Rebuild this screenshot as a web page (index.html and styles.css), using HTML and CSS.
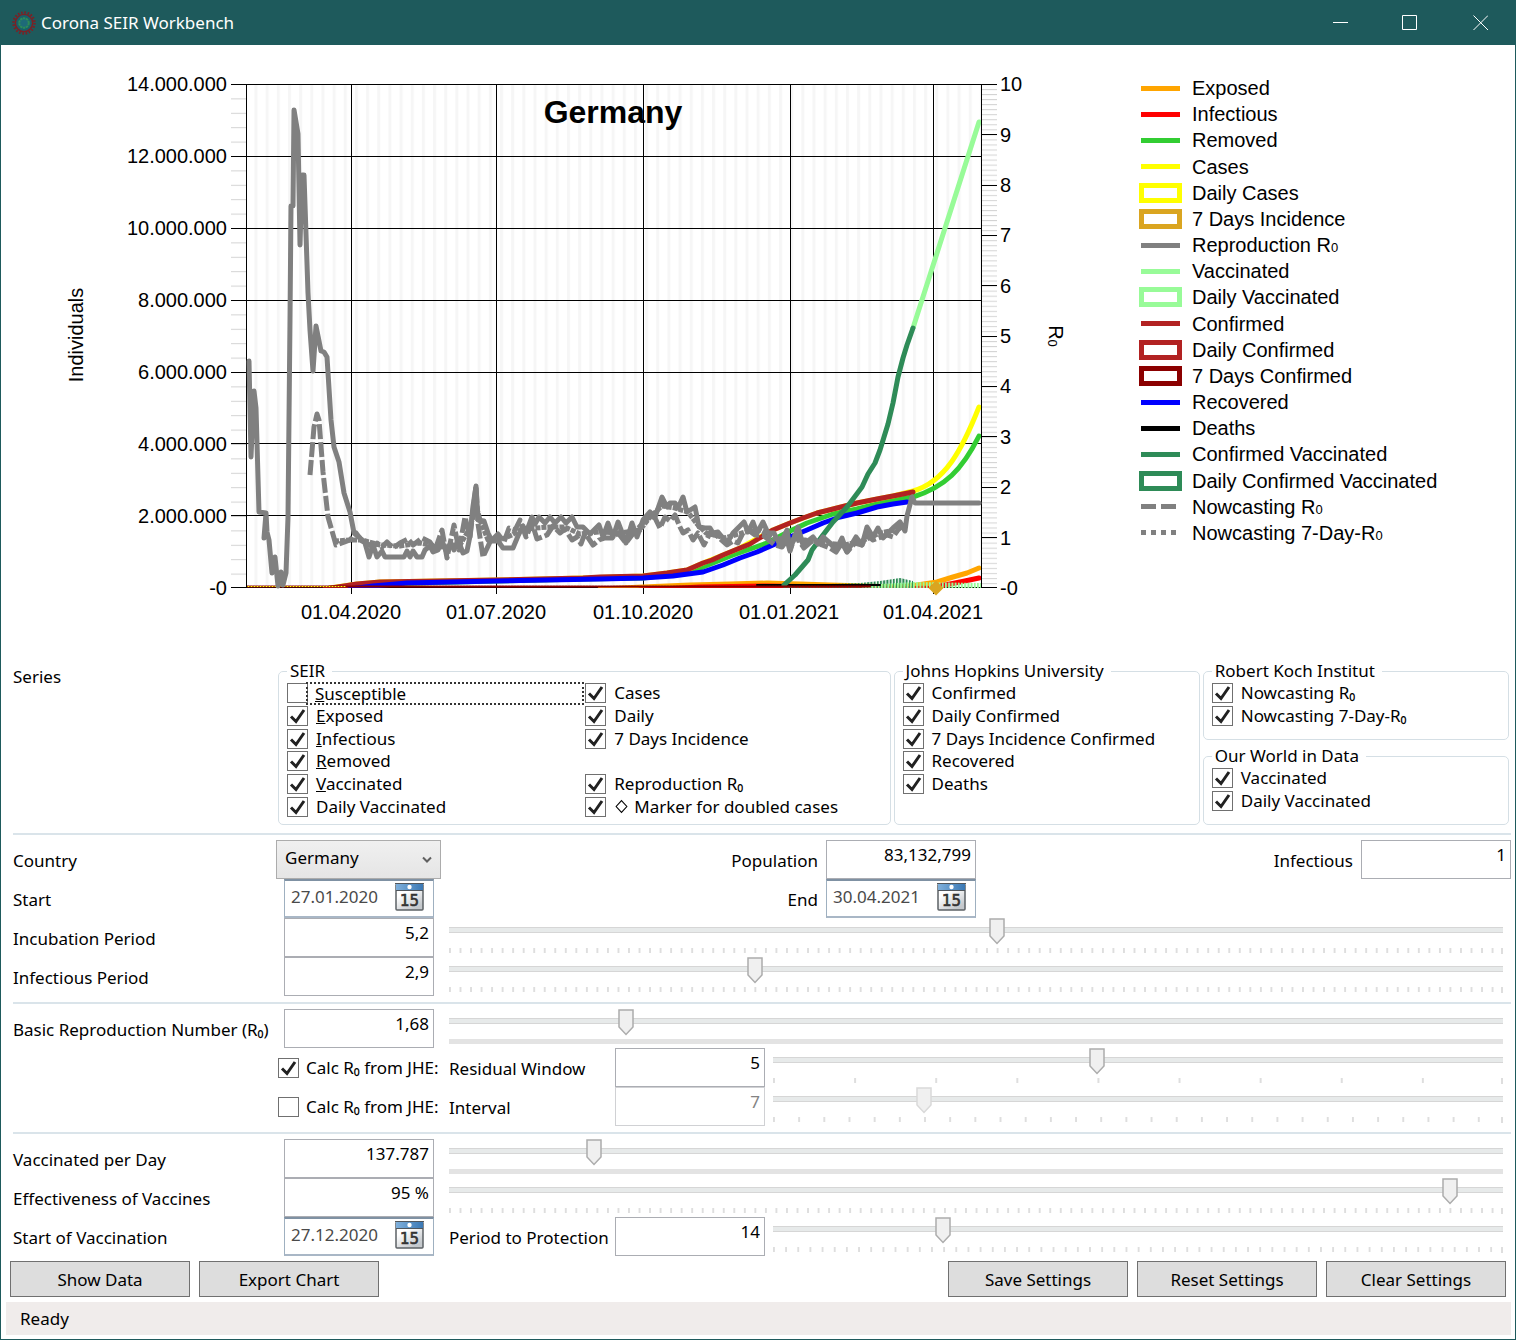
FILE: index.html
```html
<!DOCTYPE html>
<html lang="en">
<head>
<meta charset="utf-8">
<title>Corona SEIR Workbench</title>
<link rel="stylesheet" href="styles.css">
</head>
<body>
<div class="window">
  <header class="titlebar">
    <svg class="app-icon" viewBox="0 0 24 24" aria-hidden="true">
      <circle cx="12" cy="12" r="10.5" fill="none" stroke="#7d2024" stroke-width="2.4" stroke-dasharray="1.6 1.7"/>
      <circle cx="12" cy="12" r="8.6" fill="#17606a" stroke="#7d2024" stroke-width="1.4"/>
      <circle cx="12" cy="12" r="4.8" fill="#1e6a78" stroke="#2e8b57" stroke-width="2" stroke-dasharray="2.4 .6"/>
    </svg>
    <h1 class="title">Corona SEIR Workbench</h1>
    <button class="win-btn" aria-label="Minimize"><svg viewBox="0 0 16 16"><path d="M1 7.500H16"/></svg></button>
    <button class="win-btn" aria-label="Maximize"><svg viewBox="0 0 16 16"><path d="M.5.5H14.500V14.500H.5Z"/></svg></button>
    <button class="win-btn" aria-label="Close"><svg viewBox="0 0 16 16"><path d="M1.500.5L16 15M16 .5L1.500 15"/></svg></button>
  </header>

  <section class="chart-area">
    <svg class="chart" viewBox="1 45 1126 615" role="img" aria-label="Germany">
      <defs>
        <pattern id="weeks" x="254.500" y="0" width="11.160" height="20" patternUnits="userSpaceOnUse"><rect width="3" height="20" fill="#f6f6f6"/></pattern>
        <pattern id="minorL" x="231" y="84" width="16" height="14.400" patternUnits="userSpaceOnUse"><rect width="16" height="1" fill="#d3d3d3"/></pattern>
        <pattern id="minorR" x="982" y="84" width="16" height="5.040" patternUnits="userSpaceOnUse"><rect width="16" height="1" fill="#d3d3d3"/></pattern>
        <pattern id="barsDark" x="0" y="0" width="3.200" height="20" patternUnits="userSpaceOnUse"><rect width="2" height="20" fill="#2e8b57"/></pattern>
        <pattern id="barsLight" x="1" y="0" width="3.200" height="20" patternUnits="userSpaceOnUse"><rect width="2" height="20" fill="#98fb98"/></pattern>
        <clipPath id="plot"><rect x="247" y="84" width="734" height="504"/></clipPath>
      </defs>
      <rect x="247" y="84" width="734" height="504" fill="url(#weeks)"/>
      <rect x="231" y="84" width="16" height="504" fill="url(#minorL)"/>
      <rect x="982" y="84" width="15" height="504" fill="url(#minorR)"/>
      <path class="axis" d="M231 84.500H997M231 156.500H981M231 228.500H981M231 300.500H981M231 372.500H981M231 443.500H981M231 515.500H981M231 587.500H997M246.500 84V588M351.500 84V594M496.500 84V594M643.500 84V594M790.500 84V594M933.500 84V594M981.500 84V588M982 134.500H997M982 185.500H997M982 235.500H997M982 285.500H997M982 336.500H997M982 386.500H997M982 436.500H997M982 487.500H997M982 537.500H997"/>
      <g class="tick left">
        <text x="227" y="91">14.000.000</text><text x="227" y="163">12.000.000</text><text x="227" y="235">10.000.000</text><text x="227" y="307">8.000.000</text><text x="227" y="379">6.000.000</text><text x="227" y="451">4.000.000</text><text x="227" y="523">2.000.000</text><text x="227" y="595">-0</text>
      </g>
      <g class="tick">
        <text x="1000" y="91">10</text><text x="1000" y="142">9</text><text x="1000" y="192">8</text><text x="1000" y="242">7</text><text x="1000" y="293">6</text><text x="1000" y="343">5</text><text x="1000" y="393">4</text><text x="1000" y="444">3</text><text x="1000" y="494">2</text><text x="1000" y="545">1</text><text x="1000" y="595">-0</text>
      </g>
      <g class="tick mid">
        <text x="351" y="619">01.04.2020</text><text x="496" y="619">01.07.2020</text><text x="643" y="619">01.10.2020</text><text x="789" y="619">01.01.2021</text><text x="933" y="619">01.04.2021</text>
        <text transform="translate(83 335) rotate(-90)">Individuals</text>
        <text transform="translate(1049 336) rotate(90)">R<tspan font-size="13" dy="1">0</tspan></text>
      </g>
      <text class="chart-title" x="613" y="123">Germany</text>

      <g class="series" clip-path="url(#plot)">
        <polyline stroke="#ffa500" points="600,589 643,587 690,585 730,584 767,583 800,584 830,585 900,587 917,585 937,582 953,577 967,573 979,568"/>
        <polyline stroke="#ff0000" points="640,590 700,587 767,586 830,587 900,589 930,588 945,585 960,582 979,578"/>
        <path stroke="#32cd32" d="M330 588L380 584L497 581L583 579L643 578L683 573L703 567L733 555L767 543L790 531L807 523L833 514L857 509L893 500L913 497C945 487 962 470 979 436"/>
        <path stroke="#ffff00" d="M330 588L357 584L380 582L497 580L583 578L643 576L667 573L687 570L703 563L723 555L740 548L773 530L790 523L817 513L857 503L893 496L913 491C945 482 962 450 979 407"/>
        <path d="M784 588V584L830 584L860 583L880 581L900 578L913 581V588Z" fill="url(#barsDark)" stroke="none"/>
        <path d="M860 588L880 584L913 582L981 583V588Z" fill="url(#barsLight)" stroke="none"/>
        <polyline stroke="#98fb98" points="913,328 979,122"/>
        <polyline stroke="#b22222" points="325,589 357,584 380,582 497,580 583,578 600,577 643,576 667,573 687,570 703,563 712,560 723,555 740,548 750,544 758,539 773,530 790,523 803,518 817,513 837,508 857,503 877,499 893,496 913,492"/>
        <polyline stroke="#0000ff" points="350,589 373,586 407,583 497,581 600,579 643,578 673,576 703,572 723,565 740,558 757,552 773,545 790,537 807,530 823,523 840,517 857,513 877,507 893,504 907,502"/>
        <path d="M757 585H880" stroke="#000" stroke-width="2"/>
        <polyline stroke="#2e8b57" points="784,585 795,575 808,560 812,550 823,535 833,522 847,507 862,487 868,474 875,463 880,450 888,424 893,403 898,377 903,358 907,345 913,328"/>
        <path d="M247 586.500H870" stroke="#8b0000" stroke-width="2" stroke-dasharray="2 1"/>
        <path d="M248 586.500H345" stroke="#ffff00" stroke-width="1" stroke-dasharray="1 2"/>
      </g>
      <g class="series">
        <polyline stroke="#808080" points="249,361 251,457 254,391 256,408 259,512 266,513 264,538 266,513 267,532 269,540 272,573 275,557 278,586 281,572 283,585 286,573 288,517 290,320 291,206 293,206 294,110 298,134 300,245 302,175 304,175 308,293 310,330 313,371 316,326 321,351 324,352 327,357 331,420 334,447 339,462 344,493 350,512 354,533 360,538 365,543 369,557 373,545 377,557 382,551 385,557 404,557 407,551 410,557 413,551 417,557 422,557 425,550 430,546 433,552 438,550 442,541 447,553 451,543 454,550 458,540 463,553 467,551 470,536 473,506 476,486 478,520 484,521 488,533 492,541 498,541 503,548 513,548 518,536 523,526 526,533 532,517 535,524 539,517 545,523 550,517 555,523 561,517 566,523 572,517 577,527 583,527 590,534 599,525 603,537 608,523 613,537 618,522 626,543 632,523 637,537 643,520 650,512 655,517 662,497 667,507 670,503 675,503 678,508 683,497 687,512 695,507 699,527 705,528 710,528 713,533 718,532 727,543 733,533 744,522 748,532 753,522 757,533 763,522 768,533 774,533 780,545 787,530 790,550 798,527 803,545 813,537 818,544 823,537 830,543 836,550 842,538 847,552 856,537 862,545 867,527 873,537 878,528 883,538 893,528 900,522 905,531 907,516 912,497 915,503 979,503"/>
        <polyline stroke="#808080" stroke-dasharray="15 3" stroke-linecap="butt" points="310,475 314,427 317,414 319,420 323,472 328,517 336,545 342,543 350,540 356,533 362,541 366,543 373,547 377,543 382,547 387,542 393,548 400,543 408,539 413,545 422,538 430,542 435,550 442,530 447,558 454,525 459,550 465,517 470,537 476,486 478,524 483,557 490,542 498,534 504,542 509,528 515,530 520,520 526,537 532,523 537,539 547,535 553,526 560,533 565,529 572,540 577,537 581,544 585,533 593,545 599,540 605,538 612,538 618,533 626,543 632,535 643,523 650,516 655,518 660,528 665,517 670,521 675,515 680,527 683,533 688,530 693,540 698,533 704,545 710,533 717,536 727,545 733,541 738,543 743,533 748,530 755,535 763,535 770,541 775,545 782,547 787,540 790,551 795,535 804,548 813,540 822,545 830,548 836,552 842,543 847,552 855,543 862,545 867,535 873,540 887,535 893,537 900,527 906,528"/>
        <polyline stroke="#808080" stroke-dasharray="5 1" stroke-linecap="butt" points="334,541 350,540 362,540 380,545 400,546 420,543 440,547 460,545 470,528 476,505 480,520 488,540 500,540 512,535 520,530 535,528 550,527 565,527 580,534 600,532 620,533 640,530 650,517 662,506 675,508 688,512 697,524 706,533 725,538 745,532 760,530 775,538 790,540 805,540 825,543 845,545 862,541 880,533 895,530 906,526"/>
        <path d="M936 580.500L943.500 588L936 595.500L928.500 588Z" fill="#daa520" stroke="none"/>
      </g>
    </svg>

    <ul class="legend">
      <li><i class="line orange"></i>Exposed</li>
      <li><i class="line red"></i>Infectious</li>
      <li><i class="line green"></i>Removed</li>
      <li><i class="line yellow"></i>Cases</li>
      <li><i class="box yellow"></i>Daily Cases</li>
      <li><i class="box gold"></i>7 Days Incidence</li>
      <li><i class="line gray"></i><span>Reproduction R<small>0</small></span></li>
      <li><i class="line pale"></i>Vaccinated</li>
      <li><i class="box pale"></i>Daily Vaccinated</li>
      <li><i class="line brick"></i>Confirmed</li>
      <li><i class="box brick"></i>Daily Confirmed</li>
      <li><i class="box dark"></i>7 Days Confirmed</li>
      <li><i class="line blue"></i>Recovered</li>
      <li><i class="line black"></i>Deaths</li>
      <li><i class="line sea"></i>Confirmed Vaccinated</li>
      <li><i class="box sea"></i>Daily Confirmed Vaccinated</li>
      <li><i class="line dashed"></i><span>Nowcasting R<small>0</small></span></li>
      <li><i class="line dotted"></i><span>Nowcasting 7-Day-R<small>0</small></span></li>
    </ul>
  </section>

  <main class="form">
    <section class="row series-row">
      <span class="series-label">Series</span>
      <div class="groups">
        <fieldset class="two-col">
          <legend>SEIR</legend>
          <label class="focused"><input type="checkbox"><span><u>S</u>usceptible</span></label>
          <label><input type="checkbox" checked><span>Cases</span></label>
          <label><input type="checkbox" checked><span><u>E</u>xposed</span></label>
          <label><input type="checkbox" checked><span>Daily</span></label>
          <label><input type="checkbox" checked><span><u>I</u>nfectious</span></label>
          <label><input type="checkbox" checked><span>7 Days Incidence</span></label>
          <label class="first"><input type="checkbox" checked><span><u>R</u>emoved</span></label>
          <label class="first"><input type="checkbox" checked><span><u>V</u>accinated</span></label>
          <label><input type="checkbox" checked><span>Reproduction R₀</span></label>
          <label><input type="checkbox" checked><span>Daily Vaccinated</span></label>
          <label><input type="checkbox" checked><span class="marker"><svg viewBox="0 0 14 14" aria-hidden="true"><path d="M7 1.500L12 7L7 12.500L2 7Z"/></svg>Marker for doubled cases</span></label>
        </fieldset>
        <fieldset class="six-rows">
          <legend>Johns Hopkins University</legend>
          <label><input type="checkbox" checked><span>Confirmed</span></label>
          <label><input type="checkbox" checked><span>Daily Confirmed</span></label>
          <label><input type="checkbox" checked><span>7 Days Incidence Confirmed</span></label>
          <label><input type="checkbox" checked><span>Recovered</span></label>
          <label><input type="checkbox" checked><span>Deaths</span></label>
        </fieldset>
        <div class="stack">
          <fieldset>
            <legend>Robert Koch Institut</legend>
            <label><input type="checkbox" checked><span>Nowcasting R₀</span></label>
            <label><input type="checkbox" checked><span>Nowcasting 7-Day-R₀</span></label>
          </fieldset>
          <fieldset>
            <legend>Our World in Data</legend>
            <label><input type="checkbox" checked><span>Vaccinated</span></label>
            <label><input type="checkbox" checked><span>Daily Vaccinated</span></label>
          </fieldset>
        </div>
      </div>
    </section>
    <hr>

    <section>
      <div class="row">
        <label class="name" for="country">Country</label>
        <select id="country"><option>Germany</option></select>
        <div class="pair">
          <div><label for="population">Population</label><input class="num" id="population" value="83,132,799"></div>
          <div><label for="infectious">Infectious</label><input class="num" id="infectious" value="1"></div>
        </div>
      </div>
      <div class="row">
        <label class="name" for="start">Start</label>
        <div class="date inset"><input id="start" value="27.01.2020"><button aria-label="Choose start date"><svg viewBox="0 0 29 28"><use href="#calendar"/></svg></button></div>
        <div class="pair">
          <div><label for="end">End</label><div class="date"><input id="end" value="30.04.2021"><button aria-label="Choose end date"><svg viewBox="0 0 29 28"><use href="#calendar"/></svg></button></div></div>
        </div>
      </div>
      <div class="row">
        <label class="name" for="incubation">Incubation Period</label>
        <input class="num inset" id="incubation" value="5,2">
        <div class="slider" style="--steps:100"><input type="range" aria-label="Incubation Period" min="0" max="100" value="52"></div>
      </div>
      <div class="row">
        <label class="name" for="infperiod">Infectious Period</label>
        <input class="num inset" id="infperiod" value="2,9">
        <div class="slider" style="--steps:100"><input type="range" aria-label="Infectious Period" min="0" max="100" value="29"></div>
      </div>
    </section>
    <hr>

    <section>
      <div class="row">
        <label class="name" for="r0">Basic Reproduction Number (R₀)</label>
        <input class="num inset" id="r0" value="1,68">
        <div class="slider solid"><input type="range" aria-label="Basic Reproduction Number" min="0" max="1000" value="168"></div>
      </div>
      <div class="row">
        <label class="check"><input type="checkbox" checked><span>Calc R₀ from JHE:</span></label>
        <div class="sub">
          <label for="window">Residual Window</label>
          <input class="num" id="window" value="5">
          <div class="slider" style="--steps:9"><input type="range" aria-label="Residual Window" min="1" max="10" value="5"></div>
        </div>
      </div>
      <div class="row">
        <label class="check"><input type="checkbox"><span>Calc R₀ from JHE:</span></label>
        <div class="sub">
          <label for="interval">Interval</label>
          <input class="num" id="interval" value="7" disabled>
          <div class="slider" style="--steps:29"><input type="range" aria-label="Interval" min="1" max="30" value="7" disabled></div>
        </div>
      </div>
    </section>
    <hr>

    <section>
      <div class="row">
        <label class="name" for="perday">Vaccinated per Day</label>
        <input class="num inset" id="perday" value="137.787">
        <div class="slider solid"><input type="range" aria-label="Vaccinated per Day" min="0" max="1000000" value="137787"></div>
      </div>
      <div class="row">
        <label class="name" for="effect">Effectiveness of Vaccines</label>
        <input class="num inset" id="effect" value="95 %">
        <div class="slider" style="--steps:100"><input type="range" aria-label="Effectiveness of Vaccines" min="0" max="100" value="95"></div>
      </div>
      <div class="row">
        <label class="name" for="vaccstart">Start of Vaccination</label>
        <div class="date inset"><input id="vaccstart" value="27.12.2020"><button aria-label="Choose start of vaccination"><svg viewBox="0 0 29 28"><use href="#calendar"/></svg></button></div>
        <div class="sub">
          <label for="protection">Period to Protection</label>
          <input class="num" id="protection" value="14">
          <div class="slider" style="--steps:60"><input type="range" aria-label="Period to Protection" min="0" max="60" value="14"></div>
        </div>
      </div>
    </section>
  </main>

  <div class="actions">
    <button>Show Data</button>
    <button>Export Chart</button>
    <button class="push">Save Settings</button>
    <button>Reset Settings</button>
    <button>Clear Settings</button>
  </div>
  <footer class="status">Ready</footer>
</div>

<svg width="0" height="0" class="symbols" aria-hidden="true">
  <defs>
    <linearGradient id="paper" x1="0" y1="0" x2="0.600" y2="1"><stop offset="0.400" stop-color="#fff"/><stop offset="1" stop-color="#c4c8cc"/></linearGradient>
    <linearGradient id="head" x1="0" y1="0" x2="1" y2="0"><stop offset="0" stop-color="#7fb0dc"/><stop offset="1" stop-color="#3a78b4"/></linearGradient>
    <symbol id="calendar" viewBox="0 0 29 28">
      <rect x="1" y="1" width="27" height="26" rx="1" fill="url(#paper)" stroke="#5c6166" stroke-width="1.500"/>
      <rect x="1" y="1" width="27" height="6" fill="url(#head)"/>
      <path d="M0 .5H29M1 7.500H28" stroke="#50565c"/>
      <circle cx="14.500" cy="4" r="2.200" fill="#fff"/>
      <text x="14.500" y="23" text-anchor="middle" font-family="DejaVu Sans, sans-serif" font-size="15" fill="#333" stroke="#333" stroke-width=".6">15</text>
    </symbol>
  </defs>
</svg>
</body>
</html>
```
FILE: styles.css
```css
* { box-sizing: border-box; }

body {
  margin: 0;
  background: #fff;
  color: #000;
  font: 17px/22px "Noto Sans", "Open Sans", sans-serif;
}

button, input, select { font: inherit; color: inherit; margin: 0; }

.symbols { position: absolute; }

.window {
  min-height: 100vh;
  display: flex;
  flex-direction: column;
  border: 1px solid #1e5a5c;
  border-top: 0;
}

/* Title bar */
.titlebar {
  display: flex;
  align-items: center;
  height: 45px;
  padding-left: 11px;
  background: #1e5a5c;
  color: #fff;
}
.app-icon { width: 24px; height: 24px; margin-right: 5px; }
.title { flex: 1; margin: 0; font-size: 17px; font-weight: 400; }
.win-btn {
  display: grid;
  place-items: center;
  width: 70px;
  height: 45px;
  padding: 0;
  border: 0;
  background: none;
}
.win-btn svg { width: 16px; height: 16px; fill: none; stroke: #fff; }

/* Chart */
.chart-area {
  display: flex;
  font: 20px/24px "Liberation Sans", Arial, sans-serif;
}
.chart { display: block; flex: 1; min-width: 0; }
.axis { fill: none; stroke: #000; }
.tick.left { text-anchor: end; }
.tick.mid { text-anchor: middle; }
.chart-title { font-size: 32px; font-weight: 700; text-anchor: middle; }
.series { fill: none; stroke-width: 5; stroke-linejoin: round; stroke-linecap: round; }

.legend {
  display: grid;
  grid-auto-rows: 1fr;
  flex: none;
  width: 388px;
  height: 471px;
  margin: 30px 0 0;
  padding: 0 0 0 12px;
  list-style: none;
}
.legend li { display: flex; align-items: center; gap: 10px; }
.legend small { font-size: 13px; line-height: 13px; }
.legend i { flex: none; color: #000; }
.line { width: 39px; height: 5px; margin: 0 2px; background: currentColor; }
.box { width: 43px; height: 20px; border: 5px solid; }
.legend .orange { color: #ffa500; }
.legend .red { color: #f00; }
.legend .green { color: #32cd32; }
.legend .yellow { color: #ff0; }
.legend .gold { color: #daa520; }
.legend .gray { color: #808080; }
.legend .pale { color: #98fb98; }
.legend .brick { color: #b22222; }
.legend .dark { color: #8b0000; }
.legend .blue { color: #00f; }
.legend .black { color: #000; }
.legend .sea { color: #2e8b57; }
.legend .dashed { background: repeating-linear-gradient(90deg, #808080 0 15px, #fff 15px 20px); width: 35px; margin-right: 6px; }
.legend .dotted { background: repeating-linear-gradient(90deg, #808080 0 5px, #fff 5px 10px); width: 35px; margin-right: 6px; }

/* Form */
.form { padding: 0 4px 0 12px; }
hr { height: 2px; margin: 6px 0 5px; border: 0; background: #dae4ea; }
.series-row + hr { margin-top: 8px; }

.row {
  display: grid;
  grid-template-columns: 263px 165px 1fr;
  align-items: start;
}
.row > .pair, .row > .sub, .row > .slider { margin-left: 8px; }
.name, .pair label, .sub label { padding-top: 10px; white-space: nowrap; }

.series-row { grid-template-columns: 263px 1fr; }
.series-label { padding-top: 6px; }
.groups {
  display: grid;
  grid-template-columns: 2fr 1fr 1fr;
  gap: 3px;
  margin: 0 2px;
}
.stack { display: grid; gap: 5px; }
fieldset {
  min-width: 0;
  margin: 0;
  padding: 0 6px 12px 8px;
  border: 1px solid #d5dfe5;
  border-radius: 5px;
  display: grid;
  grid-auto-rows: 1fr;
  height: 80px;
}
legend { height: 22px; padding: 0 7px 0 3px; }
.two-col, .six-rows { height: 165px; padding-bottom: 6px; }
.two-col { grid-template-columns: 1fr 1fr; }
.six-rows { grid-template-rows: repeat(6, 1fr); }
.two-col .first { grid-column: 1; }

fieldset label, .check { display: flex; align-items: center; white-space: nowrap; }
fieldset label span { flex: 1; padding-left: 8px; }
.check span { padding-left: 7px; }
.focused span { margin: 0 2px 0 -1px; outline: 2px dotted #333; outline-offset: -1px; line-height: 21px; }
.marker { display: flex; align-items: center; gap: 5px; }
.marker svg { width: 15px; height: 15px; fill: none; stroke: #000; }

input[type="checkbox"] {
  appearance: none;
  flex: none;
  width: 21px;
  height: 20px;
  border: 1px solid #707070;
  background: #fff center / 21px 20px no-repeat;
}
input[type="checkbox"]:checked {
  background-image: url("data:image/svg+xml,%3Csvg xmlns='http://www.w3.org/2000/svg' viewBox='0 0 21 20'%3E%3Cpath d='M4 10.500L9 15.500L17 4' fill='none' stroke='%23212121' stroke-width='3'/%3E%3C/svg%3E");
}
.check { grid-column: 2; height: 39px; padding-left: 2px; }

.inset { margin-left: 8px; }
.num, .date { width: 150px; height: 39px; border: 1px solid #abadb3; background: #fff; }
.num { padding: 0 4px 10px; text-align: right; border-radius: 0; }
.num:disabled { border-color: #d0d1d4; color: #838383; background: #fff; }

.date { display: flex; border: 2px solid #8f9fb0; border-color: #7f91a3 #9fb0c0 #a9b7c6; border-width: 2px 1px; }
.date input { width: 104px; padding: 0 0 3px 6px; border: 0; background: none; color: #4a4a4a; }
.date button { width: 29px; height: 28px; margin: 2px 0 0 6px; padding: 0; border: 0; background: none; }
.date svg { display: block; width: 29px; height: 28px; }

select {
  appearance: none;
  height: 39px;
  padding: 0 8px 4px;
  border: 1px solid #acacac;
  border-radius: 0;
  background:
    url("data:image/svg+xml,%3Csvg xmlns='http://www.w3.org/2000/svg' viewBox='0 0 10 8'%3E%3Cpath d='M1 1.500L5 5.500L9 1.500' fill='none' stroke='%23606060' stroke-width='2'/%3E%3C/svg%3E") right 8px center / 10px 8px no-repeat,
    linear-gradient(#f0f0f0, #e5e5e5);
}

.pair { display: grid; grid-template-columns: 1fr 1fr; }
.pair > div { display: flex; justify-content: flex-end; gap: 8px; }
.pair > div:first-child { padding-right: 4px; }
.sub { display: grid; grid-template-columns: 166px 150px 1fr; }
.sub .slider { margin-left: 8px; }

/* Sliders: rail and tick marks sit on the wrapper, the thumb on the input */
.slider {
  height: 39px;
  margin-right: 8px;
  background:
    linear-gradient(#dedede, #dedede) right 30px / 2px 6px no-repeat,
    linear-gradient(90deg, #dedede 2px, transparent 2px) 0 30px / calc(100% / var(--steps, 1)) 5px repeat-x,
    linear-gradient(#e7eaea, #e7eaea) 0 10px / 100% 4px no-repeat,
    linear-gradient(#d6d6d6, #d6d6d6) 0 9px / 100% 6px no-repeat;
}
.slider.solid {
  background:
    linear-gradient(#e3e3e3, #e3e3e3) 0 30px / 100% 5px no-repeat,
    linear-gradient(#e7eaea, #e7eaea) 0 10px / 100% 4px no-repeat,
    linear-gradient(#d6d6d6, #d6d6d6) 0 9px / 100% 6px no-repeat;
}
.slider input {
  appearance: none;
  display: block;
  width: calc(100% + 16px);
  height: 27px;
  margin: 0 -8px;
  background: none;
}
.slider input::-webkit-slider-thumb {
  appearance: none;
  width: 16px;
  height: 27px;
  background: url("data:image/svg+xml,%3Csvg xmlns='http://www.w3.org/2000/svg' viewBox='0 0 16 27'%3E%3Cpath d='M1 1H15V18L8 25.500L1 18Z' fill='%23f0f0f0' stroke='%23acacac' stroke-width='1.500'/%3E%3C/svg%3E");
}
.slider input:disabled::-webkit-slider-thumb {
  background: url("data:image/svg+xml,%3Csvg xmlns='http://www.w3.org/2000/svg' viewBox='0 0 16 27'%3E%3Cpath d='M1 1H15V18L8 25.500L1 18Z' fill='%23f0f0f0' stroke='%23d9d9d9' stroke-width='1.500'/%3E%3C/svg%3E");
}

/* Footer */
.actions { display: flex; gap: 9px; padding: 5px 9px; }
.actions button {
  width: 180px;
  height: 36px;
  padding: 2px 0 0;
  border: 1px solid #707070;
  background: #ddd;
}
.actions .push { margin-left: auto; }
.status { margin: 0 4px 4px 5px; padding: 6px 14px 5px; background: #f0eceb; }
```
